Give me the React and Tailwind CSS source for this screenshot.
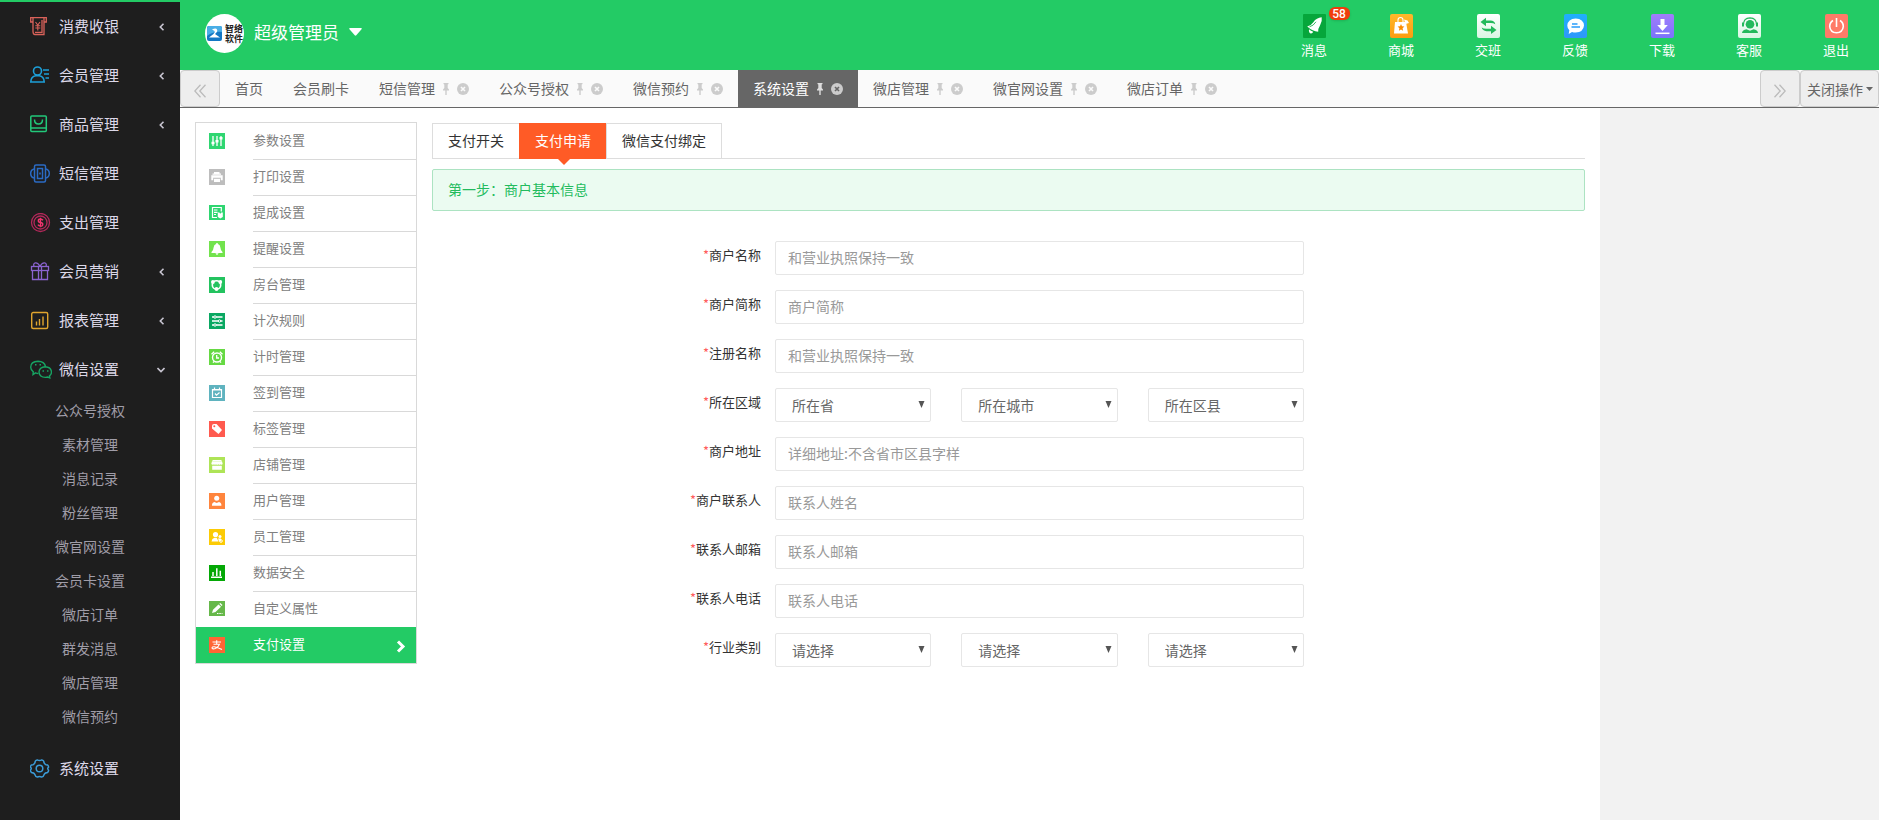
import React from 'react';
import clsx from 'clsx';

const sideMenu = [
    { label: '消费收银', icon: 'cash', arrow: 'left' },
    { label: '会员管理', icon: 'member', arrow: 'left' },
    { label: '商品管理', icon: 'goods', arrow: 'left' },
    { label: '短信管理', icon: 'sms' },
    { label: '支出管理', icon: 'expense' },
    { label: '会员营销', icon: 'gift', arrow: 'left' },
    { label: '报表管理', icon: 'report', arrow: 'left' },
    {
        label: '微信设置',
        icon: 'wechat',
        arrow: 'down',
        children: [
            '公众号授权', '素材管理', '消息记录', '粉丝管理', '微官网设置',
            '会员卡设置', '微店订单', '群发消息', '微店管理', '微信预约',
        ],
    },
    { label: '系统设置', icon: 'gear' },
];

const topActions = [
    { label: '消息', icon: 'bell', badge: 58 },
    { label: '商城', icon: 'mall' },
    { label: '交班', icon: 'shift' },
    { label: '反馈', icon: 'feedback' },
    { label: '下载', icon: 'download' },
    { label: '客服', icon: 'service' },
    { label: '退出', icon: 'exit' },
];

const pageTabs = [
    { label: '首页', fixed: true },
    { label: '会员刷卡', fixed: true },
    { label: '短信管理' },
    { label: '公众号授权' },
    { label: '微信预约' },
    { label: '系统设置', active: true },
    { label: '微店管理' },
    { label: '微官网设置' },
    { label: '微店订单' },
];

const settings = [
    { label: '参数设置', icon: 'params' },
    { label: '打印设置', icon: 'print' },
    { label: '提成设置', icon: 'commission' },
    { label: '提醒设置', icon: 'remind' },
    { label: '房台管理', icon: 'room' },
    { label: '计次规则', icon: 'count' },
    { label: '计时管理', icon: 'timer' },
    { label: '签到管理', icon: 'checkin' },
    { label: '标签管理', icon: 'tag' },
    { label: '店铺管理', icon: 'shop' },
    { label: '用户管理', icon: 'user' },
    { label: '员工管理', icon: 'staff' },
    { label: '数据安全', icon: 'data' },
    { label: '自定义属性', icon: 'custom' },
    { label: '支付设置', icon: 'pay', active: true },
];

const fields = [
    { id: 'name', label: '商户名称', placeholder: '和营业执照保持一致' },
    { id: 'short', label: '商户简称', placeholder: '商户简称' },
    { id: 'reg', label: '注册名称', placeholder: '和营业执照保持一致' },
    { id: 'area', label: '所在区域', options: ['所在省', '所在城市', '所在区县'] },
    { id: 'address', label: '商户地址', placeholder: '详细地址:不含省市区县字样' },
    { id: 'contact', label: '商户联系人', placeholder: '联系人姓名' },
    { id: 'email', label: '联系人邮箱', placeholder: '联系人邮箱' },
    { id: 'phone', label: '联系人电话', placeholder: '联系人电话' },
    { id: 'industry', label: '行业类别', options: ['请选择', '请选择', '请选择'] },
];

/* Line icons of the dark sidebar, 22x20 canvas */
const sideIcons = {
    cash: (
        <g stroke="#d9625a" strokeWidth="1.3">
            <path d="M3 5H.7V.7h15.600V5H14" />
            <path d="M3 1v13.500q0 3 2 3h9V1M5 15.300h7V3" />
            <path d="m5.500 5 2.300 3L10 5M7.800 8v5.500M5.300 8.700h5M5.300 11h5" strokeWidth="1.1" />
        </g>
    ),
    member: (
        <g stroke="#1d9fd8" strokeWidth="1.6">
            <circle cx="7.5" cy="5" r="4" />
            <path d="M.8 16q0-5.500 5-6.300h3.400q5 .8 5 6.300z" />
            <path d="M13 4h6M14 8h5M15.500 12h3.500" strokeWidth="1.4" />
        </g>
    ),
    goods: (
        <g stroke="#22c87a" strokeWidth="1.5">
            <rect x=".8" y="1" width="15.5" height="15.5" rx="1" />
            <path d="M1 13h15M4.500 4.500q0 4.500 4 4.500t4-4.500" />
        </g>
    ),
    sms: (
        <g stroke="#2b6bc4" strokeWidth="1.5">
            <rect x="4.500" y="1" width="11" height="17" rx="1.5" />
            <rect x="7.500" y="4.500" width="5" height="10" />
            <path d="M4 5Q.7 6 .7 9.500T4 14M16 5q3.300 1 3.300 4.500T16 14M10 8.500v2" />
        </g>
    ),
    expense: (
        <g stroke="#b3285a" strokeWidth="1.3">
            <circle cx="10.500" cy="9.500" r="9" />
            <circle cx="10.500" cy="9.500" r="6.500" />
            <path d="M13 7.300q-1-1.300-2.500-1.300-2.200 0-2.200 1.700t2.200 1.800 2.300 1.900-2.300 1.700q-1.700 0-2.600-1.400M10.500 4.800v9.500" stroke="#f0356e" strokeWidth="1.4" />
        </g>
    ),
    gift: (
        <g stroke="#8a63cf" strokeWidth="1.3">
            <rect x="1.500" y="4.500" width="17" height="4" />
            <path d="M2.500 9v8.500h15V9M8.500 5v12.500M11.500 5v12.500M10 4.500Q8 .5 5.500.8T4 4.500M10 4.500Q12 .5 14.500.8T16 4.500" />
        </g>
    ),
    report: (
        <g stroke="#e0a52e" strokeWidth="1.4">
            <rect x="1.700" y="1.500" width="16" height="16" rx="1.5" />
            <path d="M6.500 14.500v-4M9.500 14.500V8M13 14.500v-9" />
        </g>
    ),
    wechat: (
        <g stroke="#17a362" strokeWidth="1.4">
            <path d="M8.500 13.500q-1.500 0-3-.6L3 14.500l.3-2.700Q.7 10 .7 7.300.7 1.500 8 1.300q6.500.2 7.500 5.200" />
            <path d="M15.300 6.700q-6 .3-6.300 5.300.5 5.200 6.300 5.400 1.300 0 2.500-.4l2 .9-.3-2q2-1.400 2-3.900-.4-5-6.200-5.300z" />
            <path d="M5 4.800h1.500M9.500 4.800H11M12.500 11H14M17 11h1.500" strokeWidth="1.6" />
        </g>
    ),
    gear: (
        <g stroke="#3b9ad6" strokeWidth="1.5">
            <path d="M7.300.9q2.200 1.400 4.400 0 1.300.3 2 1.200 0 2.500 2.300 3.600l1.600.3q1 1 1 2.200-1.800 1.300 0 3 0 1.200-1 2.200-3.300.3-3.900 3-.2 1.400-2 1.700-2.200-1.400-4.400 0-1.800-.3-2-1.700-.6-2.700-3.900-3-1-1-1-2.200 1.800-1.700 0-3 0-1.200 1-2.200l1.600-.3q2.300-1.100 2.300-3.600.7-.9 2-1.200z" strokeLinejoin="round" />
            <circle cx="9.500" cy="9.500" r="3.300" />
        </g>
    ),
};

/* Header icons, 23x24 canvas */
const topIcons = {
    bell: (
        <>
            <rect width="23" height="24" rx="1" fill="#06a63b" />
            <path d="M18.700 3.300q.8 4.200-1.700 8.200-2 3-1.800 6.200-5.500-.2-11-5.200Q8 11.700 10.300 8.200q3.200-4.600 8.400-4.900z" fill="#fff" />
            <path d="M6 15.300q1.300 1.400 4.200 2.500-.8 2-2.500 1.700-2.200-.7-1.700-4.200z" fill="#fff" />
            <path d="M6.500 12.800q4-1 6.500-5" stroke="#06a63b" strokeWidth=".8" fill="none" />
        </>
    ),
    mall: (
        <>
            <rect width="23" height="24" rx="2" fill="url(#mallFill)" />
            <path d="M5 8h11l2 11.500H4z" fill="#fff" />
            <path d="M8 10V6q0-2.500 2.500-2.500T13 6v4" stroke="#fff" strokeWidth="1.1" fill="none" />
            <path d="m14 5.500 3.500 1L19 9l-3.500 1z" fill="#fff" />
            <path d="m11 10 1 2.300 2.400.2-1.800 1.700.5 2.500-2.100-1.300-2.100 1.300.5-2.500-1.800-1.700 2.400-.2z" fill="#fb8c00" />
        </>
    ),
    shift: (
        <>
            <rect width="23" height="24" rx="2" fill="url(#lightFill)" />
            <path d="M3.500 8 9 3.800v2.800h4.500q4 .2 4.800 3.600-1.800-1.200-4.500-1.200H9v3.200zM19.500 16 14 20v-2.800H9.500q-4-.2-4.800-3.600 1.800 1.200 4.500 1.200H14v-3z" fill="#23b95c" />
        </>
    ),
    feedback: (
        <>
            <rect width="23" height="24" rx="2" fill="url(#blueFill)" />
            <path d="M11.700 4.500q7.800.4 8.300 7-.5 6.500-8.300 7-2.200 0-3.700-.6L4.700 20l.6-3.700Q3.300 14.400 3.300 11.500q.6-6.600 8.400-7z" fill="#fff" />
            <path d="M8 10h5.500M7.500 13h8.500" stroke="#2a9dfa" strokeWidth="1.3" />
        </>
    ),
    download: (
        <>
            <rect width="23" height="24" rx="2" fill="url(#purpleFill)" />
            <path d="M9.500 5h4v6h3.300l-5.300 6-5.300-6h3.300z" fill="#fff" />
            <path d="M4.500 19.300h14" stroke="#fff" strokeWidth="1.5" />
        </>
    ),
    service: (
        <>
            <rect width="23" height="24" rx="2" fill="url(#lightFill)" />
            <circle cx="12" cy="10.300" r="4.300" fill="#23b95c" />
            <path d="M5.500 10.500q0-6.500 6.500-6.700 6.500.2 6.500 6.700" stroke="#23b95c" strokeWidth="1.2" fill="none" />
            <path d="M4 8.500h2v4H4zM18 8.500h2v4h-2zM4 19q.4-3.300 4.500-3.800l3.500 1.500 3.500-1.500q4.100.5 4.500 3.800z" fill="#23b95c" />
        </>
    ),
    exit: (
        <>
            <rect width="23" height="24" rx="2" fill="#ff7a68" />
            <path d="M8 6.500q-3.300 2-3.300 6 .6 6 6.800 6.300 6.200-.3 6.800-6.300 0-4-3.300-6M11.500 4v9" stroke="#fff" strokeWidth="1.6" fill="none" />
        </>
    ),
};

/* Settings list icons, 16x16 canvas */
const settingIcons = {
    params: (
        <>
            <rect width="16" height="16" fill="#2fd671" />
            <path d="M4 3v10M8 3v10M12 3v10" stroke="#fff" strokeWidth="1.3" />
            <path d="M2.500 8.800h3v2.400h-3zM6.500 7h3v2.400h-3zM10.500 4h3v2.400h-3z" fill="#fff" />
        </>
    ),
    print: (
        <>
            <rect width="16" height="16" fill="#bdbdbd" />
            <path d="M5 3h5.500v1.500H12v1.300H3.500V4.500H5zM2.300 6.300h11.400v5h-1.900V8.800H4.200v2.500H2.300z" fill="#fff" />
            <path d="M5 9.800h6V13H5z" fill="#fff" />
        </>
    ),
    commission: (
        <>
            <rect width="16" height="15" fill="#2fd671" />
            <path d="M8 12.500H3.500v-10h8.800v4M5 5h3.500M5 7.300h3.500M5 9.500h2" stroke="#fff" strokeWidth="1.2" fill="none" />
            <path d="M8.800 7.500h1.500l1 1.300 1-1.300h1.500V12l-2.500 1.500L8.800 12z" fill="#fff" />
        </>
    ),
    remind: (
        <>
            <rect width="16" height="16" fill="#72e34d" />
            <path d="M8 2q1 0 1 1 2.200.8 2.400 3.500.2 3 2.100 4.500v.9h-11V11q1.900-1.500 2.100-4.500Q4.800 3.800 7 3q0-1 1-1zM6.500 12.300h3q-.5 1.500-1.500 1.500t-1.500-1.500z" fill="#fff" />
        </>
    ),
    room: (
        <>
            <rect width="16" height="16" fill="#23c35f" />
            <circle cx="7.500" cy="8" r="4.200" stroke="#fff" strokeWidth="1.6" fill="none" />
            <circle cx="3.900" cy="5" r="1.900" fill="#fff" />
            <circle cx="11.300" cy="5" r="1.900" fill="#fff" />
            <circle cx="7.500" cy="12" r="1.900" fill="#fff" />
        </>
    ),
    count: (
        <>
            <rect width="16" height="16" fill="#0aa862" />
            <path d="M3 4h10.500M3 8h10.500M3 12h10.500" stroke="#fff" strokeWidth="1.4" />
            <g fill="#0aa862" stroke="#fff" strokeWidth="1">
                <circle cx="6" cy="4" r="1.2" />
                <circle cx="10.500" cy="8" r="1.2" />
                <circle cx="6" cy="12" r="1.2" />
            </g>
        </>
    ),
    timer: (
        <>
            <rect width="16" height="16" fill="#66d943" />
            <circle cx="8" cy="8.500" r="4.500" stroke="#fff" strokeWidth="1.4" fill="none" />
            <path d="M7.700 6v3H10M2.500 5.300l2.700-2.500M10.800 2.800l2.700 2.500M5 12.500 4 13.700M11 12.500l1 1.200" stroke="#fff" strokeWidth="1.3" fill="none" />
        </>
    ),
    checkin: (
        <>
            <rect width="16" height="16" fill="#5fb3bf" />
            <path d="M3.500 4.500h9v8h-9zM3 5h10" stroke="#fff" strokeWidth="1.2" fill="none" />
            <path d="M5.500 2.500v2M10.500 2.500v2M6 8.500l1.500 1.700L10.500 7.500" stroke="#fff" strokeWidth="1.2" fill="none" />
        </>
    ),
    tag: (
        <>
            <rect width="16" height="16" fill="#ff5a4f" />
            <path d="M3 5q0-2 2-2h2.500l5.500 6-3.500 4L3 7.500z" fill="#fff" />
            <circle cx="5.300" cy="5.300" r="1" fill="#ff5a4f" />
        </>
    ),
    shop: (
        <>
            <rect width="16" height="16" fill="#aee457" />
            <path d="M3.500 3h9v1h-9zM3 4.300h10L13.700 7q-1 1.300-2.200.2-1 1-2 0-1.300 1-2.500 0-1 1-2 0-1.500 1.100-2.700-.2zM3.200 8.800h9.600v4H3.200z" fill="#fff" />
        </>
    ),
    user: (
        <>
            <rect width="16" height="16" fill="#ff853d" />
            <circle cx="7.700" cy="5.300" r="2.500" fill="#fff" />
            <path d="M3 12.700q-.2-3 2.400-3.700l2.300 1L10 9q2.600.7 2.400 3.700z" fill="#fff" />
        </>
    ),
    staff: (
        <>
            <rect width="16" height="16" fill="#fccb05" />
            <circle cx="6.500" cy="5.500" r="2.600" fill="#fff" />
            <path d="M2.500 12.500q.3-3 3-3.700h2.200l1.800 3.700z" fill="#fff" />
            <circle cx="11" cy="7.500" r="1.500" fill="#fff" />
            <path d="M9 9.500h3v2.300l-2 .7z" fill="#fff" />
            <circle cx="12" cy="12" r="1.300" stroke="#fff" strokeWidth="1" fill="none" />
        </>
    ),
    data: (
        <>
            <rect width="16" height="16" fill="#04a806" />
            <path d="M2 12.300h11M4 11V7M7.800 11V3.300M11.300 11V5.800" stroke="#fff" strokeWidth="1.5" />
        </>
    ),
    custom: (
        <>
            <rect width="16" height="15" fill="#66b84a" />
            <path d="m3 12 1-3.300 5.500-5.200L12 5.700 6.500 11zM10.300 2.800l1-.8 2.200 2-.9 1z" fill="#fff" />
            <path d="M8 12.500h5.500" stroke="#fff" strokeWidth="1" strokeDasharray="1.5 .8" />
        </>
    ),
    pay: (
        <>
            <rect width="16" height="16" fill="#ff6534" />
            <path d="M3.500 5h8.500M7.700 3.200V7M4.500 7.200h6q-1 3-4 4.300-3 1-3.500-.5 0-1.500 2.300-1.300Q8.500 10.200 13 12.500" stroke="#fff" strokeWidth="1.1" fill="none" />
        </>
    ),
};

const Gradients = () => (
    <svg width="0" height="0" className="absolute" aria-hidden="true">
        <defs>
            <linearGradient id="mallFill" x2="0" y2="1"><stop stopColor="#ffb82a" /><stop offset="1" stopColor="#fd9c10" /></linearGradient>
            <linearGradient id="lightFill" x2="0" y2="1"><stop stopColor="#fff" /><stop offset="1" stopColor="#d8f6e3" /></linearGradient>
            <linearGradient id="blueFill" x2="0" y2="1"><stop stopColor="#1fb0fb" /><stop offset="1" stopColor="#2f97fa" /></linearGradient>
            <linearGradient id="purpleFill" x2="0" y2="1"><stop stopColor="#a27cfb" /><stop offset="1" stopColor="#7a74fb" /></linearGradient>
        </defs>
    </svg>
);

const Sidebar = () => (
    <aside className="w-[180px] shrink-0 border-t-2 border-[#23cb65] bg-[#1e1e1e]">
        <nav>
            {sideMenu.map((item) => (
                <div key={item.label}>
                    <a href="#" className="flex h-[49px] items-center pr-[15px] pl-[30px] text-[15px] text-[#dcd8e8]">
                        <svg width="22" height="20" viewBox="0 0 22 20" fill="none" className="mr-[7px] shrink-0">
                            {sideIcons[item.icon]}
                        </svg>
                        <span className="flex-1">{item.label}</span>
                        {item.arrow && (
                            <svg width="8" height="8" viewBox="0 0 8 8" fill="none" stroke="#c9c6d2" strokeWidth="1.6">
                                <path d={item.arrow === 'left' ? 'M6.500.8 3.300 4l3.200 3.200' : 'M.5 2 4 5.500 7.500 2'} />
                            </svg>
                        )}
                    </a>
                    {item.children && (
                        <ul className="pb-2.5">
                            {item.children.map((child) => (
                                <li key={child}>
                                    <a href="#" className="block h-[34px] text-center text-sm leading-8 text-[#a09da8]">{child}</a>
                                </li>
                            ))}
                        </ul>
                    )}
                </div>
            ))}
        </nav>
    </aside>
);

const Header = () => (
    <header className="flex h-[70px] justify-between bg-[#23cb65] text-white">
        <div className="flex h-[67px] items-center pl-[25px]">
            <div className="flex size-[39px] items-center gap-[3px] overflow-hidden rounded-full bg-white pl-0.5">
                <svg width="15" height="15" viewBox="0 0 15 15" className="shrink-0">
                    <rect width="15" height="15" rx="2" fill="#1377c4" />
                    <path d="M0 2q0-2 2-2h11q2 0 2 2v4Q7 5 0 10z" fill="#49aee6" />
                    <path d="M5 3.500q4-2 5 0T8 8l5 3.500H2L6.500 8q2-2 1-3z" fill="#fff" />
                </svg>
                <span className="w-5 shrink-0 text-[9px] leading-[10px] font-bold text-[#222]">智络软件</span>
            </div>
            <button className="ml-2.5 flex items-center gap-2.5 pb-[3px] text-[17px]">
                超级管理员
                <svg width="13" height="8" viewBox="0 0 13 8" fill="#fff"><path d="M1 0h11q1.300.3.500 1.300L7.300 7.300q-.8.700-1.600 0L.5 1.300Q-.3.300 1 0z" /></svg>
            </button>
        </div>
        <div className="flex">
            {topActions.map((item) => (
                <button key={item.label} className="flex w-[87px] flex-col items-center pt-3.5 pl-px text-[13px]">
                    <span className="relative">
                        <svg width="23" height="24" viewBox="0 0 23 24">{topIcons[item.icon]}</svg>
                        {item.badge && (
                            <span className="absolute -top-[7px] left-[26px] h-[13px] w-[21px] rounded-md bg-[#f03c0c] text-center font-[Roboto,sans-serif] text-xs leading-[14px] font-medium shadow">
                                {item.badge}
                            </span>
                        )}
                    </span>
                    <span className="mt-1 leading-4">{item.label}</span>
                </button>
            ))}
        </div>
    </header>
);

const TabBar = () => (
    <div className="flex h-[38px] border-b border-[#666] bg-[#fafafa] text-sm text-[#666]">
        <button aria-label="向左" className="flex w-10 items-center justify-center rounded-sm border border-[#ccc] bg-[#eee] pt-1">
            <svg width="12" height="14" viewBox="0 0 12 14" fill="none" stroke="#bbb" strokeWidth="1.3"><path d="M6.500.8.800 7l5.700 6.200M11.500.8 5.800 7l5.700 6.200" /></svg>
        </button>
        <nav className="flex flex-1">
            {pageTabs.map((tab) => (
                <a key={tab.label} href="#" className={clsx('flex items-center px-[15px]', tab.active && 'bg-[#666] text-white')}>
                    <span className="pb-0.5">{tab.label}</span>
                    {!tab.fixed && (
                        <>
                            <svg width="6" height="12" viewBox="0 0 6 12" fill={tab.active ? '#ddd' : '#ccc'} className="ml-2">
                                <path d="M.5 0h5v1l-.8.500V5L6 6.500v1H3.700V12H2.300V7.500H0v-1L1.300 5V1.500L.5 1z" />
                            </svg>
                            <svg width="12" height="12" viewBox="0 0 12 12" className="ml-2">
                                <circle cx="6" cy="6" r="6" fill="#ccc" />
                                <path d="m4 4 4 4M8 4 4 8" stroke={tab.active ? '#666' : '#fafafa'} strokeWidth="1.6" />
                            </svg>
                        </>
                    )}
                </a>
            ))}
        </nav>
        <button aria-label="向右" className="flex w-10 items-center justify-center rounded-sm border border-[#ccc] bg-[#eee] pt-1">
            <svg width="12" height="14" viewBox="0 0 12 14" fill="none" stroke="#bbb" strokeWidth="1.3"><path d="M.5.8 6.200 7 .5 13.200M5.500.8 11.200 7l-5.700 6.200" /></svg>
        </button>
        <button className="flex w-[79px] items-center gap-[3px] rounded-sm border border-[#ccc] bg-[#eee] pl-1.5">
            关闭操作
            <svg width="7" height="4" viewBox="0 0 7 4" fill="#666"><path d="M0 0h7L3.500 4z" /></svg>
        </button>
    </div>
);

const SettingsMenu = () => (
    <nav className="w-[222px] shrink-0 self-start border border-[#d9d9d9] text-[13px] text-[#808080]">
        {settings.map((item, i) => (
            <a
                key={item.label}
                href="#"
                className={clsx('flex h-9 pl-[13px]', item.active && 'bg-[#23cb65] text-white')}
            >
                <svg width="16" height="16" viewBox="0 0 16 16" className="mt-2.5 shrink-0">{settingIcons[item.icon]}</svg>
                <span
                    className={clsx(
                        'ml-7 flex flex-1 items-center justify-between border-t pr-2.5 pb-[3px]',
                        i === 0 || item.active ? 'border-transparent' : 'border-[#d9d9d9]'
                    )}
                >
                    {item.label}
                    {item.active && (
                        <svg width="10" height="13" viewBox="0 0 10 13" fill="none" stroke="#fff" strokeWidth="3" className="mt-1"><path d="m2 1.500 5 5-5 5" /></svg>
                    )}
                </span>
            </a>
        ))}
    </nav>
);

const SelectBox = ({ label, option }) => (
    <div className="relative flex-1">
        <select aria-label={label} className="h-[34px] w-full appearance-none rounded-xs border border-[#e6e6e6] bg-white pl-4 text-sm text-[#666]">
            <option>{option}</option>
        </select>
        <svg width="7" height="7" viewBox="0 0 7 7" fill="#555" className="pointer-events-none absolute top-[13px] right-1.5"><path d="M.5 0h6l-3 7z" /></svg>
    </div>
);

const MerchantForm = () => (
    <form className="mt-[30px] flex flex-col gap-[15px]">
        {fields.map((field) => (
            <div key={field.id} className="flex gap-3.5">
                <label htmlFor={field.options ? undefined : field.id} className="w-[329px] text-right text-[13px] leading-7 text-[#333]">
                    <span className="text-[#ff5c5c]">*</span>{field.label}
                </label>
                {field.options ? (
                    <div className="flex max-w-[529px] flex-1 gap-[30px]">
                        {field.options.map((option, i) => (
                            <SelectBox key={i} label={`${field.label} ${i + 1}`} option={option} />
                        ))}
                    </div>
                ) : (
                    <input
                        id={field.id}
                        type="text"
                        placeholder={field.placeholder}
                        className="h-[34px] max-w-[529px] flex-1 rounded-xs border border-[#e6e6e6] px-3 pb-0.5 text-sm placeholder:text-[#999]"
                    />
                )}
            </div>
        ))}
    </form>
);

const Payment = () => (
    <section className="min-w-0 flex-1">
        <div className="mt-px flex h-9 border-b border-[#ddd] text-sm text-[#333]">
            <button className="h-9 border border-r-0 border-[#ddd] px-[15px] pb-0.5">支付开关</button>
            <button className="relative h-9 border border-r-0 border-[#ff5b26] bg-[#ff5b26] px-[15px] pb-0.5 text-white">
                支付申请
                <svg width="14" height="7" viewBox="0 0 14 7" fill="#ff5b26" className="absolute top-full left-[37px]"><path d="M0 0h14L7 7z" /></svg>
            </button>
            <button className="h-9 border border-[#ddd] px-[15px] pb-0.5">微信支付绑定</button>
        </div>
        <div className="mt-2.5 h-[42px] rounded-xs border border-[#ace3c2] bg-[#ebfbf1] px-[15px] text-sm leading-[38px] text-[#23bb5e]">
            第一步：商户基本信息
        </div>
        <MerchantForm />
    </section>
);

const App = () => (
    <div className="flex min-h-screen bg-[#f2f2f2] font-['Noto_Sans_CJK_SC',sans-serif]">
        <Gradients />
        <Sidebar />
        <div className="flex min-w-0 flex-1 flex-col">
            <Header />
            <TabBar />
            <main className="flex max-w-[1420px] flex-1 gap-[15px] bg-white px-[15px] pt-3.5">
                <SettingsMenu />
                <Payment />
            </main>
        </div>
    </div>
);

export default App;
